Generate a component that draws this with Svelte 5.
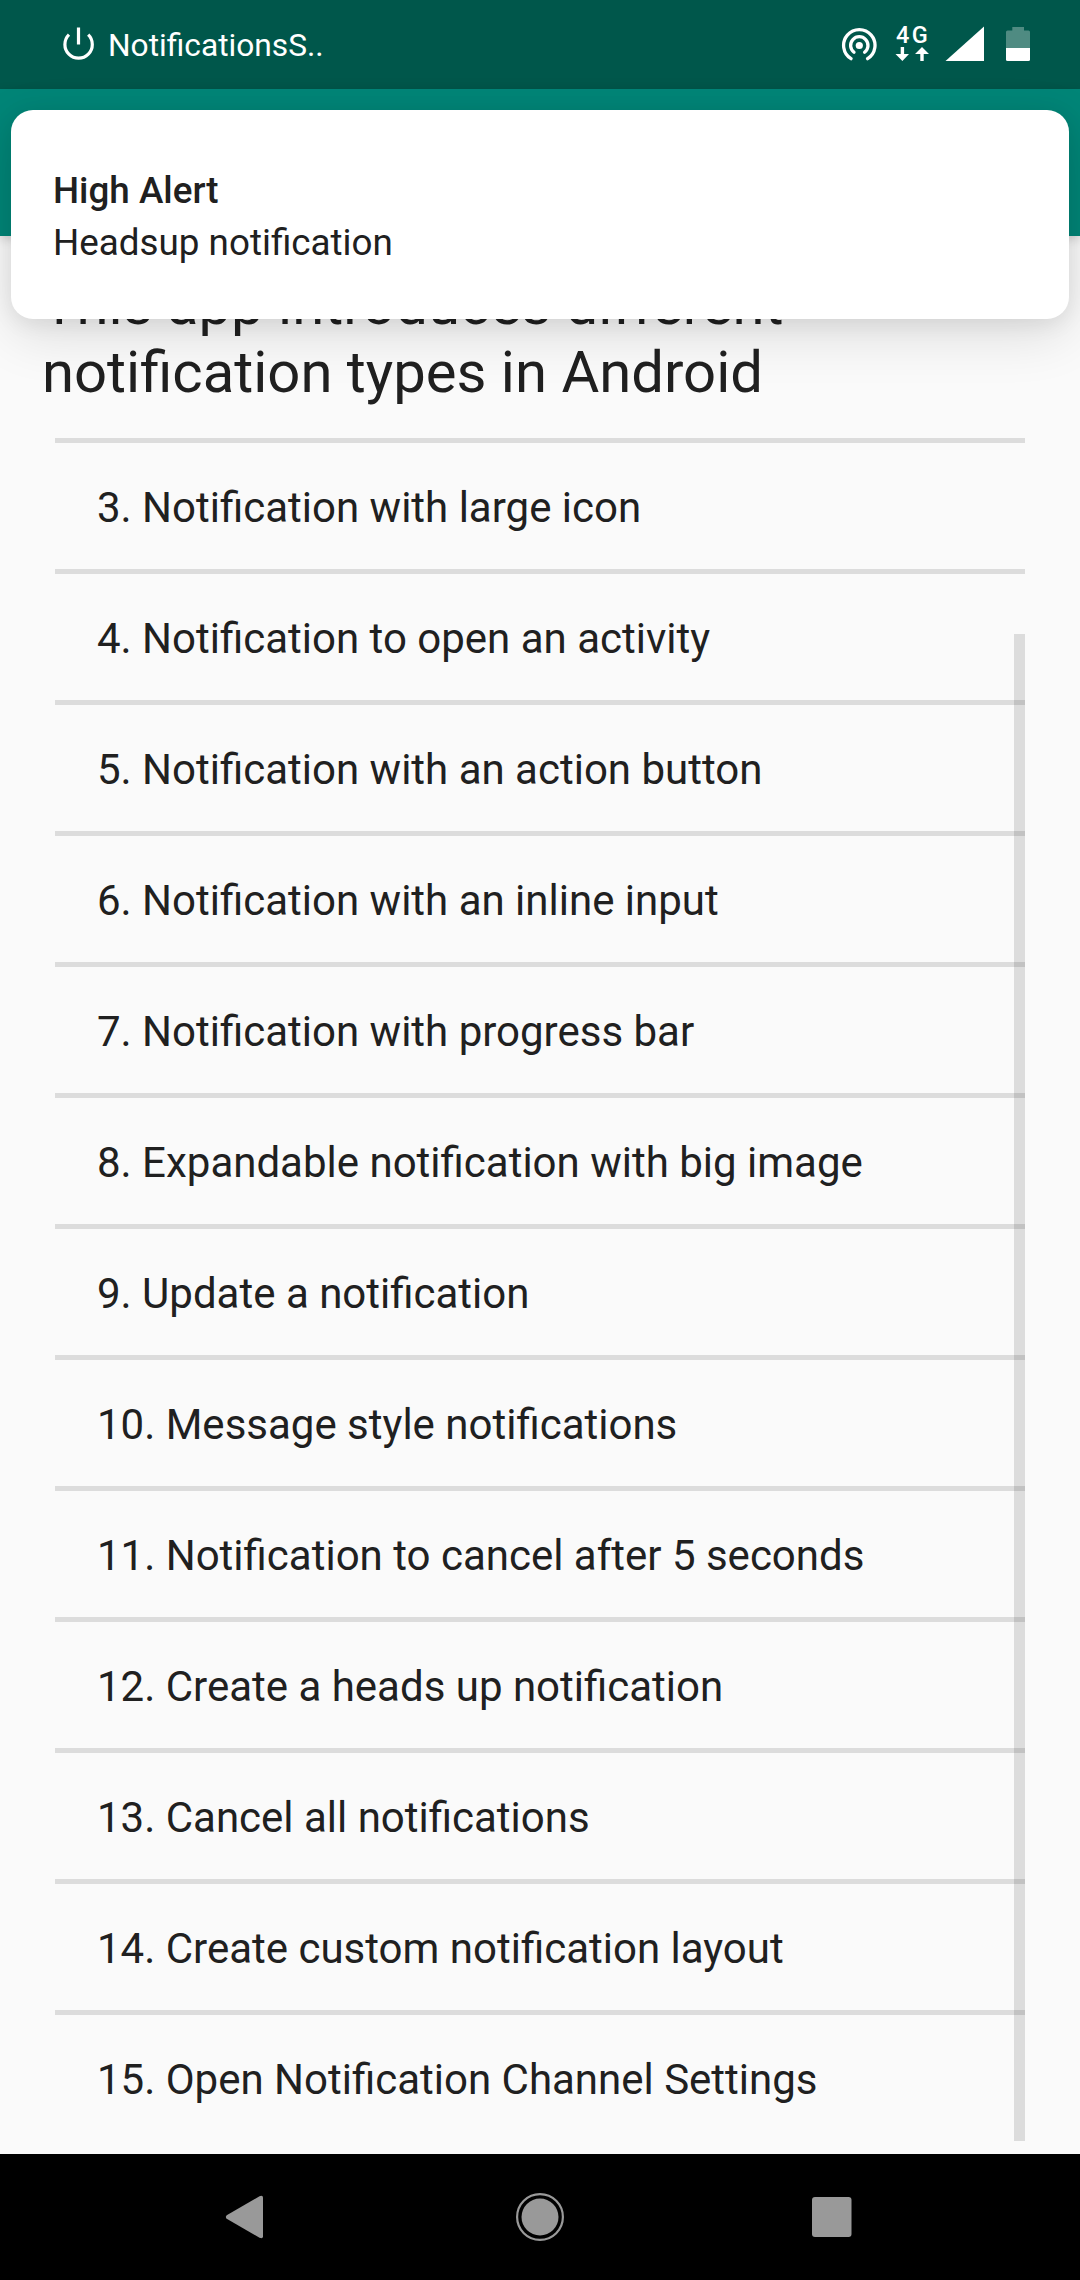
<script>
  const items = [
    '3. Notification with large icon',
    '4. Notification to open an activity',
    '5. Notification with an action button',
    '6. Notification with an inline input',
    '7. Notification with progress bar',
    '8. Expandable notification with big image',
    '9. Update a notification',
    '10. Message style notifications',
    '11. Notification to cancel after 5 seconds',
    '12. Create a heads up notification',
    '13. Cancel all notifications',
    '14. Create custom notification layout',
    '15. Open Notification Channel Settings'
  ];
</script>

<div class="screen">
  <header class="status">
    <svg class="power" width="32" height="34" viewBox="63 27 32 34" fill="none" stroke="#fff" stroke-width="3.2">
      <path d="M78.5 27.5V44.5" />
      <path d="M69 34.7A13.7 13.7 0 1 0 88.2 34.7" />
    </svg>
    <span class="app">NotificationsS..</span>
    <div class="indicators">
      <svg class="hotspot" width="36" height="34" viewBox="841 27 36 34" fill="none" stroke="#fff" stroke-width="3.3" stroke-linecap="round">
        <path d="M851 58.7A15.7 15.7 0 1 1 867.6 58.7" />
        <path d="M854 52.3A8.7 8.7 0 1 1 864.6 52.3" />
        <circle cx="859.3" cy="45.5" r="3.6" fill="#fff" stroke="none" />
      </svg>
      <div class="network">
        <span>4G</span>
        <svg width="34" height="14" viewBox="0 0 34 14" fill="#fff">
          <path d="M5.7 0h3.4v7H14L7.4 14 .5 7h5.2z" />
          <path d="M27 0l7 7h-5.3v7h-3.4V7H20z" />
        </svg>
      </div>
      <svg class="signal" width="39" height="35" viewBox="0 0 39 35"><path fill="#fff" d="M.5 35H39V.5z" /></svg>
      <svg width="24" height="34" viewBox="0 0 24 34" fill="#fff">
        <path opacity=".31" d="M6.3 0H18v3.5h4.5Q24 3.5 24 5v16H0V5q0-1.5 1.5-1.5h4.8z" />
        <path d="M0 21h24v11.5q0 1.5-1.5 1.5h-21Q0 34 0 32.5z" />
      </svg>
    </div>
  </header>
  <div class="toolbar"></div>
  <main>
    <h1>This app introduces different notification types in Android</h1>
    <ul>
      {#each items as item}
        <li>{item}</li>
      {/each}
    </ul>
    <div class="scrollbar"></div>
  </main>
  <nav>
    <svg width="48" height="48" viewBox="0 0 48 48" fill="#999"><path d="M6.7 22.2 39.5 3.2Q43 1.7 43 4.8V43.2Q43 46.3 39.5 44.8L6.7 25.8Q5 24 6.7 22.2z" /></svg>
    <svg width="48" height="48" viewBox="0 0 48 48" fill="none"><circle cx="24" cy="24" r="22.9" stroke="#999" stroke-width="2.2" /><circle cx="24" cy="24" r="18.5" fill="#999" /></svg>
    <svg width="48" height="48" viewBox="0 0 48 48" fill="#999"><rect x="2" y="4" width="39.5" height="40" rx="3" /></svg>
  </nav>
  <section class="alert">
    <strong>High Alert</strong>
    <span>Headsup notification</span>
  </section>
</div>

<style>
  :global(body) {
    background: #fafafa;
  }
  .screen {
    position: relative;
    display: flex;
    flex-direction: column;
    width: 1080px;
    height: 2280px;
    overflow: hidden;
    background: #fafafa;
    color: #202020;
    font-family: Roboto, 'Liberation Sans', sans-serif;
  }
  svg {
    display: block;
    flex: none;
  }
  .status {
    display: flex;
    align-items: flex-start;
    box-sizing: border-box;
    height: 89px;
    padding: 26px 50px 0 63px;
    background: #00574b;
    color: #fff;
  }
  .power {
    margin-top: 1px;
  }
  .app {
    margin: 0 auto 0 13px;
    font-size: 31.7px;
    line-height: 40px;
  }
  .indicators {
    display: flex;
    align-items: flex-start;
    padding-top: 1px;
  }
  .network {
    display: flex;
    flex-direction: column;
    width: 34px;
    margin-left: 18px;
  }
  .network span {
    height: 20px;
    padding-left: 1px;
    font-size: 23.5px;
    font-weight: 500;
    line-height: 17px;
    letter-spacing: 2.3px;
    white-space: nowrap;
  }
  .signal {
    margin: -1px 22px 0 16px;
  }
  .toolbar {
    z-index: 1;
    height: 147px;
    background: #008577;
    box-shadow: 0 3px 10px rgba(0, 0, 0, 0.16);
  }
  main {
    position: relative;
    box-sizing: border-box;
    height: 1918px;
    padding-top: 34px;
  }
  h1 {
    margin: 0;
    padding: 0 200px 0 42px;
    font-size: 58px;
    font-weight: 400;
    line-height: 68px;
  }
  ul {
    list-style: none;
    margin: 32px 55px 0;
    padding: 0;
  }
  li {
    box-sizing: border-box;
    height: 131px;
    padding: 2px 0 0 42px;
    border-top: 5px solid #dcdcdc;
    font-size: 42px;
    line-height: 126px;
  }
  .scrollbar {
    position: absolute;
    top: 398px;
    right: 55px;
    width: 11px;
    height: 1507px;
    background: rgba(0, 0, 0, 0.118);
  }
  nav {
    display: flex;
    align-items: center;
    justify-content: space-between;
    box-sizing: border-box;
    height: 126px;
    padding: 0 222px;
    background: #000;
  }
  nav svg:first-child {
    margin-left: -2px;
    margin-right: 2px;
  }
  .alert {
    position: absolute;
    z-index: 2;
    top: 110px;
    left: 11px;
    display: flex;
    flex-direction: column;
    box-sizing: border-box;
    width: 1058px;
    height: 209px;
    padding: 55px 42px 0;
    border-radius: 22px;
    background: #fff;
    box-shadow: 0 16px 54px rgba(0, 0, 0, 0.12), 0 4px 22px rgba(0, 0, 0, 0.08);
    font-size: 36.8px;
    line-height: 52px;
  }
  .alert strong {
    font-weight: 500;
  }
</style>
